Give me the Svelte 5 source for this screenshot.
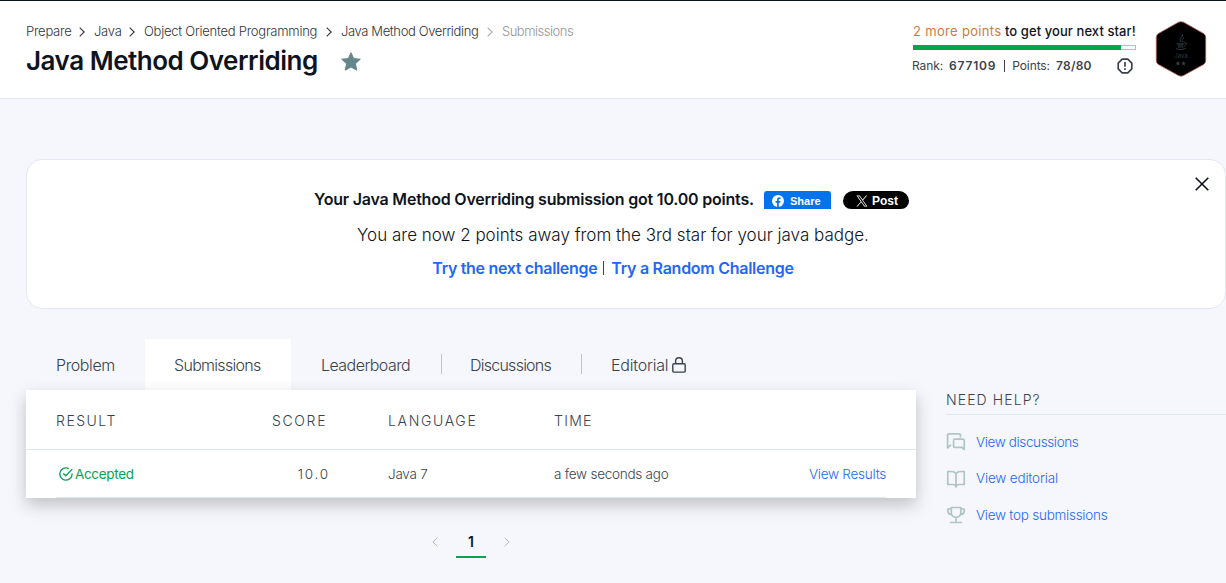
<script>
  const crumbs = [
    { label: 'Prepare', width: 44 },
    { label: 'Java', width: 26 },
    { label: 'Object Oriented Programming', width: 173 },
    { label: 'Java Method Overriding', width: 137 },
    { label: 'Submissions', width: 72 }
  ];
  const tabs = [
    { id: 'problem', label: 'Problem' },
    { id: 'submissions', label: 'Submissions' },
    { id: 'leaderboard', label: 'Leaderboard' },
    { id: 'discussions', label: 'Discussions' },
    { id: 'editorial', label: 'Editorial' }
  ];
  let active = $state('submissions');
</script>

<div class="page">
  <header>
    <div class="heading">
      <nav class="crumbs">
        {#each crumbs as c, i}
          {#if i > 0}
            <svg class:muted={i === 4} width="6" height="10" viewBox="0 0 6 10"><path d="M.7.7 5.2 5 .7 9.3" /></svg>
          {/if}
          <a class:tight={i === 3} class:muted={i === 4} style:width="{c.width}px">{c.label}</a>
        {/each}
      </nav>
      <div class="title">
        <h1>Java Method Overriding</h1>
        <svg width="20" height="19" viewBox="0 0 20 19"><path fill="#65868a" stroke="#65868a" stroke-linejoin="round" d="M10 .7 12.7 6.6 19.3 7.2 14.4 11.8 15.8 18.2 10 15 4.2 18.2 5.6 11.8.7 7.2 7.3 6.6Z" /></svg>
      </div>
    </div>
    <div class="progress">
      <div class="next"><span>2 more points</span> to get your next star!</div>
      <div class="bar"><i style:width="208px"></i></div>
      <div class="rank">
        <span>Rank:</span><b class="rn">677109</b><em></em><span>Points:</span><b>78/80</b>
        <svg width="16" height="16" viewBox="0 0 16 16"><path fill="none" stroke="#39424e" stroke-width="1.7" stroke-linejoin="round" d="M5.2 1.2h5.600l4 4v5.600l-4 4H5.200l-4-4V5.200ZM8 4v4.800M8 10.300v1.700" /></svg>
      </div>
    </div>
    <svg class="badge" width="52" height="56" viewBox="0 0 52 56">
      <path fill="#000" stroke="#b85b48" stroke-width=".8" d="M23.5 1.2Q26 .2 28.5 1.2L48.5 12.5Q50.7 14 50.7 16.5V39.5Q50.7 42 48.5 43.5L28.5 54.5Q26 55.8 23.5 54.5L3.5 43.5Q1.3 42 1.3 39.5V16.5Q1.3 14 3.5 12.5Z" />
      <g fill="none" stroke="#303d47" stroke-width="1"><path d="M27 13c2 3-4 4-1 8M29 17c-3 2-2 2-1 4M22 22c-2 1 8 1.5 7 0M22.5 24h6M23 26h5.5M21 27.5c2 1.5 9 1 10-.5M29 22c4-1 2 3 0 3" /></g>
      <text x="26" y="37">Java</text>
      <g fill="#303d47"><path d="m23 40 .7 1.5 1.6.2-1.2 1.1.3 1.7-1.4-.8-1.4.8.3-1.7-1.2-1.1 1.6-.2ZM28.5 40l.7 1.5 1.6.2-1.2 1.1.3 1.7-1.4-.8-1.4.8.3-1.7-1.2-1.1 1.6-.2Z" /></g>
    </svg>
  </header>

  <section class="banner">
    <div class="got">
      <strong>Your Java Method Overriding submission got 10.00 points.</strong>
      <button class="share"><svg width="12" height="12" viewBox="0 0 12 12"><circle cx="6" cy="6" r="6" fill="#fff" /><path fill="#0073ed" d="M5.1 12V7.8H3.6V6h1.5V4.7c0-1.6.9-2.4 2.3-2.4l1.1.1V4h-.8c-.7 0-.9.4-.9.9V6h1.7l-.3 1.8H6.8V12Z" /></svg>Share</button>
      <button class="post"><svg width="12" height="12" viewBox="0 0 24 24"><path fill="#fff" d="M14.1 10.3 22.3 1h-2L13.2 9.1 7.6 1H1l8.6 12.3L1 23h2l7.5-8.6 6 8.6H23ZM11.4 13.3l-.9-1.2L3.7 2.4h3l5.5 7.8.9 1.2 7.2 10.2h-3Z" /></svg>Post</button>
    </div>
    <p>You are now 2 points away from the 3rd star for your java badge.</p>
    <div class="next-links"><a>Try the next challenge</a><em></em><a class="random">Try a Random Challenge</a></div>
    <svg class="close" width="14" height="14" viewBox="0 0 14 14"><path d="m.7.7 12.6 12.6M13.3.7.7 13.3" /></svg>
  </section>

  <div class="content">
    <main>
      <div class="tabs">
        {#each tabs as t}
          <button class={t.id} class:active={active === t.id} onclick={() => (active = t.id)}>
            <span>{t.label}</span>
            {#if t.id === 'editorial'}
              <svg width="14" height="16" viewBox="0 0 14 16"><rect x=".8" y="6.7" width="12.4" height="8.4" rx="1.2" /><path d="M3.6 6.7V4.2a3.4 3.4 0 0 1 6.8 0v2.5" /></svg>
            {/if}
          </button>
        {/each}
      </div>
      <div class="table">
        <div class="row head"><span class="result">RESULT</span><span class="score">SCORE</span><span class="lang">LANGUAGE</span><span class="time">TIME</span></div>
        <div class="row body">
          <span class="ok"><svg width="14" height="14" viewBox="0 0 14 14"><path d="M13 6.3a6.1 6.1 0 1 1-3.3-4.7M4.3 6.5l2.4 2.3 6.6-6.7" /></svg><span>Accepted</span></span>
          <span class="score">10.0</span><span class="lang">Java 7</span><span class="time">a few seconds ago</span><a>View Results</a>
        </div>
      </div>
      <div class="pages">
        <svg width="6" height="10" viewBox="0 0 6 10"><path d="M5.3.8 1 5l4.3 4.2" /></svg>
        <b>1</b>
        <svg width="6" height="10" viewBox="0 0 6 10"><path d="M.7.8 5 5 .7 9.2" /></svg>
      </div>
    </main>
    <aside>
      <h2>NEED HELP?</h2>
      <ul>
        <li><svg width="20" height="20" viewBox="0 0 20 20"><path d="M14.4 5V2.8a1 1 0 0 0-1-1H2.6a1 1 0 0 0-1 1v13l3-2.6M8.6 7.2h8.6a1 1 0 0 1 1 1v9.3l-2.4-2.2H8.6a1 1 0 0 1-1-1V8.2a1 1 0 0 1 1-1Z" /></svg><a class="disc">View discussions</a></li>
        <li><svg width="20" height="20" viewBox="0 0 20 20"><path d="M10 4.500C8.800 2.900 7.500 2.500 5.500 2.500H1.800v13h5C8.700 15.500 10 16.200 10 18ZM10 4.500c1.200-1.600 2.500-2 4.500-2h3.700v13h-5C11.300 15.500 10 16.200 10 18" /></svg><a class="edit">View editorial</a></li>
        <li><svg width="20" height="20" viewBox="0 0 20 20"><path d="M5.3 2.5h9.5v6.3q-1 3.5-4.75 3.5T5.3 8.8ZM5.3 4H1.9v2.5q.5 2.8 3.6 3M14.8 4h3.4v2.5q-.5 2.8-3.6 3M10 12.5v4.8M4.5 17.5h11" /></svg><a class="top">View top submissions</a></li>
      </ul>
    </aside>
  </div>
</div>

<style>
  :global(body) { margin: 0; background: #f5f7fc; }
  .page { width: 1226px; height: 583px; overflow: hidden; box-sizing: border-box; border-top: 1px solid #0e141e; font-family: Inter, "Liberation Sans", sans-serif; color: #39424e; background: #f5f7fc; }
  a, span, strong, p, h1, h2, b { white-space: nowrap; }
  button { border: 0; padding: 0; font-family: inherit; cursor: pointer; }
  header { display: flex; height: 97px; background: #fff; border-bottom: 1px solid #e4e7f1; padding-left: 26px; }
  .heading { width: 886px; padding-top: 20px; }
  .crumbs { display: flex; align-items: center; height: 20px; font-size: 13px; font-weight: 300; letter-spacing: -.25px; color: #303338; }
  .crumbs svg { margin: 1px 9px 0; flex: none; fill: none; stroke: #303338; stroke-width: 1.1; }
  .crumbs a { flex: none; }
  .crumbs a.tight { letter-spacing: -.37px; }
  .crumbs a.muted { color: #92959a; letter-spacing: -.5px; }
  .crumbs svg.muted { stroke: #aaa; }
  .title { display: flex; align-items: center; height: 40px; }
  h1 { margin: 0; width: 315px; font-size: 26px; line-height: 40px; font-weight: 600; letter-spacing: -.49px; color: #0e141e; }
  .progress { width: 224px; padding-top: 20px; }
  .next { height: 20px; line-height: 20px; padding-left: 1px; font-size: 13px; font-weight: 500; letter-spacing: .08px; white-space: nowrap; color: #0e141e; }
  .next span { color: #d1793f; font-weight: 400; letter-spacing: .32px; }
  .bar { margin: 4px 0 0 1px; height: 5px; box-sizing: border-box; background: #fff; box-shadow: inset 0 0 0 1px #acc3c3; }
  .bar i { display: block; height: 5px; background: #05a44f; }
  .rank { display: flex; align-items: center; height: 20px; margin-top: 5.5px; font-size: 12px; }
  .rank span { letter-spacing: -.1px; }
  .rank b { margin-left: 6px; font-weight: 600; letter-spacing: .25px; }
  .rank b.rn { letter-spacing: .8px; }
  .rank em { width: 1px; height: 12px; background: #39424e; margin: 0 7px 0 8px; }
  .rank svg { margin-left: auto; margin-right: 3px; }
  .badge { margin: 20px 0 0 19px; }
  .badge text { font-size: 6px; fill: #303d47; text-anchor: middle; }

  .banner { position: relative; margin: 60px 0 0 26px; height: 150px; box-sizing: border-box; padding: 26px 26px 0 0; border: 1px solid #e4e7f1; border-radius: 16px; background: #fff; color: #0e141e; display: flex; flex-direction: column; align-items: center; }
  .got { display: flex; align-items: center; height: 26px; margin-right: 3px; }
  .got strong { width: 450px; font-size: 16px; font-weight: 600; letter-spacing: -.21px; }
  .got button { display: flex; align-items: center; box-sizing: border-box; height: 18px; color: #fff; font-family: "Liberation Sans", Arial, sans-serif; font-weight: 700; }
  .got .share { width: 67px; padding: 2px 0 0 8px; gap: 6px; background: #0073ed; border-radius: 3px 3px 0 0; font-size: 11px; margin-top: 1px; }
  .got .post { width: 66px; padding: 2px 0 0 13px; gap: 4px; margin: 1px 0 0 12px; background: #000; border-radius: 10px 10px 8px 8px; font-size: 12px; }
  p { margin: 8px 0 0; height: 30px; line-height: 30px; font-size: 17px; font-weight: 300; letter-spacing: 0; }
  .next-links { display: flex; align-items: center; height: 24px; margin-top: 6px; font-size: 16px; font-weight: 600; letter-spacing: -.32px; color: #2467f5; }
  .next-links .random { letter-spacing: -.27px; }
  .next-links em { width: 1px; height: 14px; background: #39424e; margin: 0 7px 0 6px; }
  .close { position: absolute; top: 17px; right: 16px; fill: none; stroke: #0e141e; stroke-width: 1.6; }

  .content { display: flex; padding: 30px 0 0 26px; }
  main { width: 890px; }
  .tabs { display: flex; height: 51px; }
  .tabs button { display: flex; align-items: center; padding: 1px 0 0 30px; background: none; font-size: 16px; font-weight: 300; letter-spacing: -.2px; color: #39424e; text-align: left; }
  .tabs .problem { width: 119px; letter-spacing: -.4px; }
  .tabs .submissions { width: 146px; padding-left: 29px; letter-spacing: -.7px; }
  .tabs .active { background: #fff; }
  .tabs .leaderboard { width: 151px; letter-spacing: -.55px; background: linear-gradient(#b7c9cc, #b7c9cc) right 15px / 1px 20px no-repeat; }
  .tabs .discussions { width: 140px; padding-left: 28px; letter-spacing: -.75px; background: linear-gradient(#b7c9cc, #b7c9cc) right 15px / 1px 20px no-repeat; }
  .tabs .editorial { padding-left: 29px; gap: 4px; }
  .tabs svg { fill: none; stroke: #39424e; stroke-width: 1.4; }
  .table { height: 108px; background: #fff; box-shadow: 0 7px 16px rgba(0, 0, 0, .22); clip-path: inset(-12px -30px -40px -30px); }
  .row { display: grid; grid-template-columns: 216px 56px 60px 166px 160px 1fr; align-items: center; box-sizing: border-box; font-size: 13.5px; font-weight: 300; letter-spacing: -.25px; }
  .head { height: 60px; padding: 1px 30px 0; border-bottom: 1px solid #dfeaea; font-size: 14px; letter-spacing: 1.5px; }
  .head .score, .head .lang { letter-spacing: 1.65px; }
  .body { height: 48px; margin: 0 30px; border-bottom: 1px solid #dfeaea; padding-top: 1px; }
  .row .lang { grid-column: 4; }
  .row .time { grid-column: 5; }
  .head .time { letter-spacing: 1.3px; }
  .body .score { justify-self: end; letter-spacing: 1.8px; margin-right: -2px; }
  .body a { color: #2467f5; justify-self: end; }
  .ok { display: flex; align-items: center; gap: 2px; padding-left: 3px; color: #0aa050; font-weight: 400; letter-spacing: -.33px; }
  .ok svg { fill: none; stroke: #0aa050; stroke-width: 1.3; }
  .pages { display: flex; justify-content: center; align-items: center; gap: 18px; margin-top: 28px; height: 32px; }
  .pages svg { fill: none; stroke: #b0b8bc; margin-bottom: 1px; }
  .pages b { width: 30px; height: 32px; box-sizing: border-box; border-bottom: 2px solid #05a44f; text-align: center; line-height: 32px; font-size: 14px; font-weight: 600; color: #0e141e; }
  aside { width: 280px; padding: 50px 0 0 30px; }
  h2 { margin: 0; height: 25px; line-height: 22px; border-bottom: 1px solid #dce9e9; font-size: 14px; font-weight: 300; letter-spacing: 1.1px; box-sizing: content-box; }
  ul { list-style: none; margin: 9px 0 0; padding: 0; }
  li { display: flex; align-items: center; height: 36.5px; gap: 10px; font-size: 13.5px; font-weight: 300; letter-spacing: -.25px; color: #2467f5; }
  li a { padding-bottom: 1px; }
  li .disc { letter-spacing: -.37px; }
  li .edit { letter-spacing: -.17px; }
  li svg { fill: none; stroke: #b0c5c6; stroke-width: 1.7; stroke-linejoin: round; stroke-linecap: round; }
</style>
